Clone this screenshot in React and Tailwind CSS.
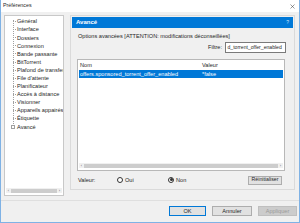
const treeItems = [
  "Général",
  "Interface",
  "Dossiers",
  "Connexion",
  "Bande passante",
  "BitTorrent",
  "Plafond de transfert",
  "File d'attente",
  "Planificateur",
  "Accès à distance",
  "Visionner",
  "Appareils appairés",
  "Étiquette",
  "Avancé",
];

function Scrollbar({ className }) {
  return (
    <div className={"flex items-center h-[5px] bg-[#f0f0f0] " + className}>
      <span className="w-[5px] text-center text-[4px] leading-none text-[#606060]">‹</span>
      <div className="flex-1 h-[4px] bg-[#cdcdcd]" />
      <span className="w-[5px] text-center text-[4px] leading-none text-[#606060]">›</span>
    </div>
  );
}

function Radio({ checked, label }) {
  return (
    <div className="flex items-center gap-[2px]">
      <span className="w-[6px] h-[6px] rounded-full border-[0.6px] border-[#333] bg-white flex items-center justify-center">
        {checked && <span className="w-[3px] h-[3px] rounded-full bg-[#333]" />}
      </span>
      <span>{label}</span>
    </div>
  );
}

export default function App() {
  return (
    <div className="w-[300px] h-[223px] bg-[#f0f0f0] border-x border-b border-[#7fb2e5] flex flex-col font-['Liberation_Sans',sans-serif] text-[5.6px] text-[#262626] overflow-hidden">
      <div className="h-[12px] shrink-0 bg-white flex items-center justify-between pl-[2px] pr-[4px]">
        <span className="text-[5.3px]">Préférences</span>
        <svg width="5" height="5" viewBox="0 0 10 10" stroke="#333" strokeWidth="1">
          <path d="M1 1L9 9M9 1L1 9" />
        </svg>
      </div>

      <div className="flex h-[188px] shrink-0">
        {/* tree */}
        <div className="ml-[3px] mt-[3px] w-[60px] h-[181px] bg-white border border-[#c8c8c8] flex flex-col">
          <div className="flex-1 pt-[1.5px] relative overflow-hidden">
            <div className="absolute left-[8px] top-[4px] h-[106px] border-l border-dotted border-[#a0a0a0]" />
            {treeItems.map((t, i) => (
              <div key={t} className="h-[8.1px] flex items-center whitespace-nowrap">
                {i === treeItems.length - 1 ? (
                  <span className="shrink-0 ml-[6px] w-[4px] h-[4px] border-[0.5px] border-[#a0a0a0] bg-white mr-[1px]" />
                ) : (
                  <span className="shrink-0 ml-[8px] w-[3px] border-t border-dotted border-[#a0a0a0]" />
                )}
                <span className="ml-[1px]">{t}</span>
              </div>
            ))}
          </div>
          <Scrollbar className="mx-[1px] mb-[2px]" />
        </div>

        {/* right frame */}
        <div className="ml-[6px] mt-[3px] w-[225px] h-[175px] border border-[#dadada] p-[1px] flex flex-col">
          <div className="h-[11px] bg-[#0078d7] flex items-center justify-between px-[4px] text-white">
            <span className="font-bold text-[6px]">Avancé</span>
            <span className="text-[5px] text-[#cfe5fa]">?</span>
          </div>
          <div className="mt-[5px] ml-[6px] h-[6px] leading-[6px] whitespace-nowrap">
            Options avancées [ATTENTION: modifications déconseillées]
          </div>
          <div className="mt-[3px] flex items-center justify-end pr-[7px] gap-[3px] h-[11px]">
            <span>Filtre:</span>
            <div className="w-[61px] h-[11px] bg-white border border-[#7a7a7a] flex items-center px-[1.5px] whitespace-nowrap overflow-hidden text-[5.1px]">
              d_torrent_offer_enabled
            </div>
          </div>
          <div className="mt-[6px] ml-[5px] mr-[8px] h-[112px] bg-white border border-[#b8b8b8] flex flex-col">
            <div className="h-[10px] flex items-center">
              <span className="w-[124px] pl-[2px]">Nom</span>
              <span>Valeur</span>
            </div>
            <div className="h-[8px] mx-[1px] bg-[#0078d7] text-white flex items-center">
              <span className="w-[123px] pl-[1px] whitespace-nowrap">offers.sponsored_torrent_offer_enabled</span>
              <span>*false</span>
            </div>
            <div className="flex-1" />
            <Scrollbar className="mx-[1px] mb-[2px]" />
          </div>
          <div className="mt-[4px] h-[10px] flex items-center pl-[6px] pr-[11px]">
            <span className="w-[39px]">Valeur:</span>
            <div className="w-[51px]">
              <Radio label="Oui" />
            </div>
            <Radio checked label="Non" />
            <div className="flex-1" />
            <div className="w-[34px] h-[9px] bg-[#e1e1e1] border border-[#adadad] flex items-center justify-center text-[5.2px]">
              Réinitialiser
            </div>
          </div>
        </div>
      </div>

      <div className="h-px bg-[#dfdfdf] shrink-0" />
      <div className="flex-1 flex items-center justify-end pr-[2px] gap-[6px] pb-[1px]">
        <div className="w-[37px] h-[10px] bg-[#e1e1e1] border border-[#0078d7] flex items-center justify-center">OK</div>
        <div className="w-[40px] h-[10px] bg-[#e1e1e1] border border-[#adadad] flex items-center justify-center">Annuler</div>
        <div className="w-[39px] h-[10px] bg-[#cccccc] border border-[#bfbfbf] text-[#9a9a9a] flex items-center justify-center">Appliquer</div>
      </div>
    </div>
  );
}
